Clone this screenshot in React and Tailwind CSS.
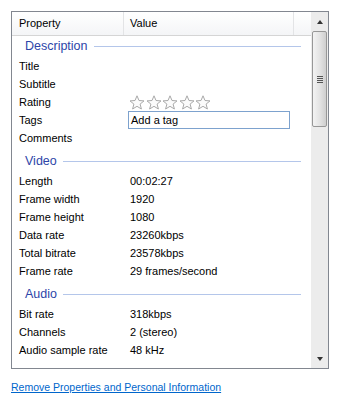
const font = { fontFamily: '"Liberation Sans", Arial, sans-serif' };

const sections = [
  {
    title: "Description",
    rows: [
      ["Title", ""],
      ["Subtitle", ""],
      ["Rating", "stars"],
      ["Tags", "tag"],
      ["Comments", ""],
    ],
  },
  {
    title: "Video",
    rows: [
      ["Length", "00:02:27"],
      ["Frame width", "1920"],
      ["Frame height", "1080"],
      ["Data rate", "23260kbps"],
      ["Total bitrate", "23578kbps"],
      ["Frame rate", "29 frames/second"],
    ],
  },
  {
    title: "Audio",
    rows: [
      ["Bit rate", "318kbps"],
      ["Channels", "2 (stereo)"],
      ["Audio sample rate", "48 kHz"],
    ],
  },
  { title: "Media", rows: [] },
];

function Star() {
  return (
    <svg width="16" height="15" viewBox="0 0 16 15" className="shrink-0">
      <path
        d="M8 0.8 L10 5.5 L15 5.9 L11.1 9.1 L12.4 14 L8 11.3 L3.6 14 L4.9 9.1 L1 5.9 L6 5.5 Z"
        fill="#fbfbfb"
        stroke="#a9a9a9"
        strokeWidth="1"
        strokeLinejoin="round"
      />
    </svg>
  );
}

function Value({ v }) {
  if (v === "stars") {
    return (
      <div className="flex gap-[0.5px] pl-[5px]">
        <Star />
        <Star />
        <Star />
        <Star />
        <Star />
      </div>
    );
  }
  if (v === "tag") {
    return (
      <div className="ml-[4px] flex h-[18px] w-[162px] items-center border border-[#7da2ce] bg-white pl-[2px] text-black">
        Add a tag
      </div>
    );
  }
  return <div className="pl-[6px]">{v}</div>;
}

function Section({ title, rows, first }) {
  return (
    <div className={first ? "" : "mt-[4px]"}>
      <div className="flex h-[21px] items-center pb-px pl-[13px] pr-[10px]">
        <span className="text-[12.5px] text-[#2d45a8]">{title}</span>
        <div className="ml-[6px] h-px flex-1 bg-[#b4c6ea]" />
      </div>
      {rows.map(([k, v]) => (
        <div key={k} className="flex h-[18px] items-center">
          <div className="w-[112px] shrink-0 pl-[7px]">{k}</div>
          <Value v={v} />
        </div>
      ))}
    </div>
  );
}

export default function App() {
  return (
    <div className="h-[408px] w-[341px] bg-white pl-[11px] pt-[11px] text-[11px] text-black" style={font}>
      <div className="flex h-[358px] w-[318px] border border-[#828790] bg-white">
        <div className="flex min-w-0 flex-1 flex-col overflow-hidden">
          <div className="flex h-[24px] shrink-0 border-b border-[#d5d5d5] bg-gradient-to-b from-white to-[#f4f5f7]">
            <div className="flex w-[112px] items-center border-r border-[#e3e4e6] pl-[7px]">Property</div>
            <div className="flex w-[170px] items-center border-r border-[#e3e4e6] pl-[6px]">Value</div>
            <div className="flex-1" />
          </div>
          <div className="flex-1 overflow-hidden">
            {sections.map((s, i) => (
              <Section key={s.title} {...s} first={i === 0} />
            ))}
          </div>
        </div>
        <div className="flex w-[17px] shrink-0 flex-col bg-[#ececec]">
          <div className="flex h-[19px] items-center justify-center">
            <div className="h-0 w-0 border-x-[3.5px] border-b-[4px] border-x-transparent border-b-[#333]" />
          </div>
          <div className="mx-[1px] flex h-[96px] items-center justify-center rounded-[2px] border border-[#979797] bg-gradient-to-r from-[#f3f3f3] via-[#e4e4e4] to-[#cfcfcf]">
            <div className="flex flex-col gap-[1px]">
              <div className="h-px w-[6px] bg-[#555]" />
              <div className="h-px w-[6px] bg-[#555]" />
              <div className="h-px w-[6px] bg-[#555]" />
              <div className="h-px w-[6px] bg-[#555]" />
            </div>
          </div>
          <div className="flex-1" />
          <div className="flex h-[19px] items-center justify-center">
            <div className="h-0 w-0 border-x-[3.5px] border-t-[4px] border-x-transparent border-t-[#333]" />
          </div>
        </div>
      </div>
      <div className="mt-[10px]">
        <a href="#" className="text-[10.5px] text-[#0066cc] underline">
          Remove Properties and Personal Information
        </a>
      </div>
    </div>
  );
}
